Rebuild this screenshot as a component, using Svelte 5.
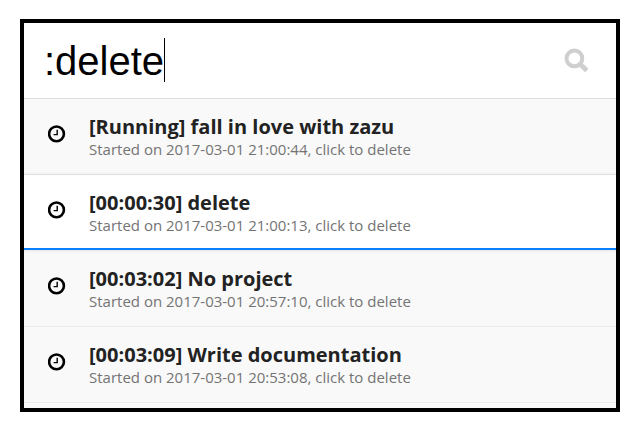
<script>
  const query = ':delete';
  const results = [
    { title: '[Running] fall in love with zazu', subtitle: 'Started on 2017-03-01 21:00:44, click to delete' },
    { title: '[00:00:30] delete', subtitle: 'Started on 2017-03-01 21:00:13, click to delete', active: true },
    { title: '[00:03:02] No project', subtitle: 'Started on 2017-03-01 20:57:10, click to delete' },
    { title: '[00:03:09] Write documentation', subtitle: 'Started on 2017-03-01 20:53:08, click to delete' }
  ];
</script>

<main class="window">
  <header class="search">
    <div class="query"><span class="typed">{query}</span><span class="caret"></span></div>
    <svg class="magnifier" width="26" height="26" viewBox="0 0 26 26" fill="none" stroke="#cfcfcf">
      <circle cx="10.4" cy="10.4" r="7.9" stroke-width="4" />
      <path d="M15.4 15.4L22.8 22.5" stroke-width="4.8" />
    </svg>
  </header>
  <ul class="results">
    {#each results as item}
      <li class="result" class:active={item.active}>
        <svg class="clock" width="18" height="18" viewBox="0 0 18 18" fill="none" stroke="#000">
          <circle cx="8.5" cy="8.9" r="7.4" stroke-width="2.6" />
          <path d="M9.2 4.7V9.6H5.6" stroke-width="1.4" />
        </svg>
        <div class="text">
          <h2>{item.title}</h2>
          <p>{item.subtitle}</p>
        </div>
      </li>
    {/each}
  </ul>
</main>

<style>
  :global(body) {
    margin: 0;
    background: #fff;
  }
  .window {
    box-sizing: border-box;
    width: 600px;
    height: 393px;
    margin: 19px 0 0 20px;
    border: 4px solid #000;
    background: #f9f9f9;
    overflow: hidden;
    display: flow-root;
  }
  .search {
    box-sizing: border-box;
    height: 76px;
    display: flex;
    align-items: center;
    justify-content: space-between;
    padding: 0 26px 0 20px;
    background: #fff;
    border-bottom: 1px solid #ddd;
  }
  .query {
    display: flex;
    align-items: flex-start;
    height: 45px;
    font: 40px/44px 'Liberation Sans', Arial, sans-serif;
    color: #000;
  }
  .typed {
    padding-top: 1px;
  }
  .caret {
    width: 1px;
    height: 44px;
    background: #000;
  }
  .results {
    list-style: none;
    margin: 0;
    padding: 0;
  }
  .result {
    box-sizing: border-box;
    height: 76px;
    display: flex;
    align-items: flex-start;
    padding: 0 24px;
    border-bottom: 1px solid #ebebeb;
  }
  .active {
    position: relative;
    height: 75px;
    margin-bottom: 1px;
    background: #fff;
    border-bottom: 2px solid #0a80ff;
    box-shadow: 0 0 4px rgba(0, 0, 0, 0.13);
  }
  .clock {
    flex: none;
    margin: 26px 23px 0 0;
  }
  .text {
    font-family: 'Open Sans', 'Noto Sans', sans-serif;
    padding-top: 14px;
    white-space: nowrap;
  }
  h2 {
    margin: 0;
    font-size: 20px;
    line-height: 27px;
    font-weight: 700;
    color: #222;
  }
  p {
    margin: 0;
    font-size: 15px;
    line-height: 18px;
    color: #747474;
  }
</style>
